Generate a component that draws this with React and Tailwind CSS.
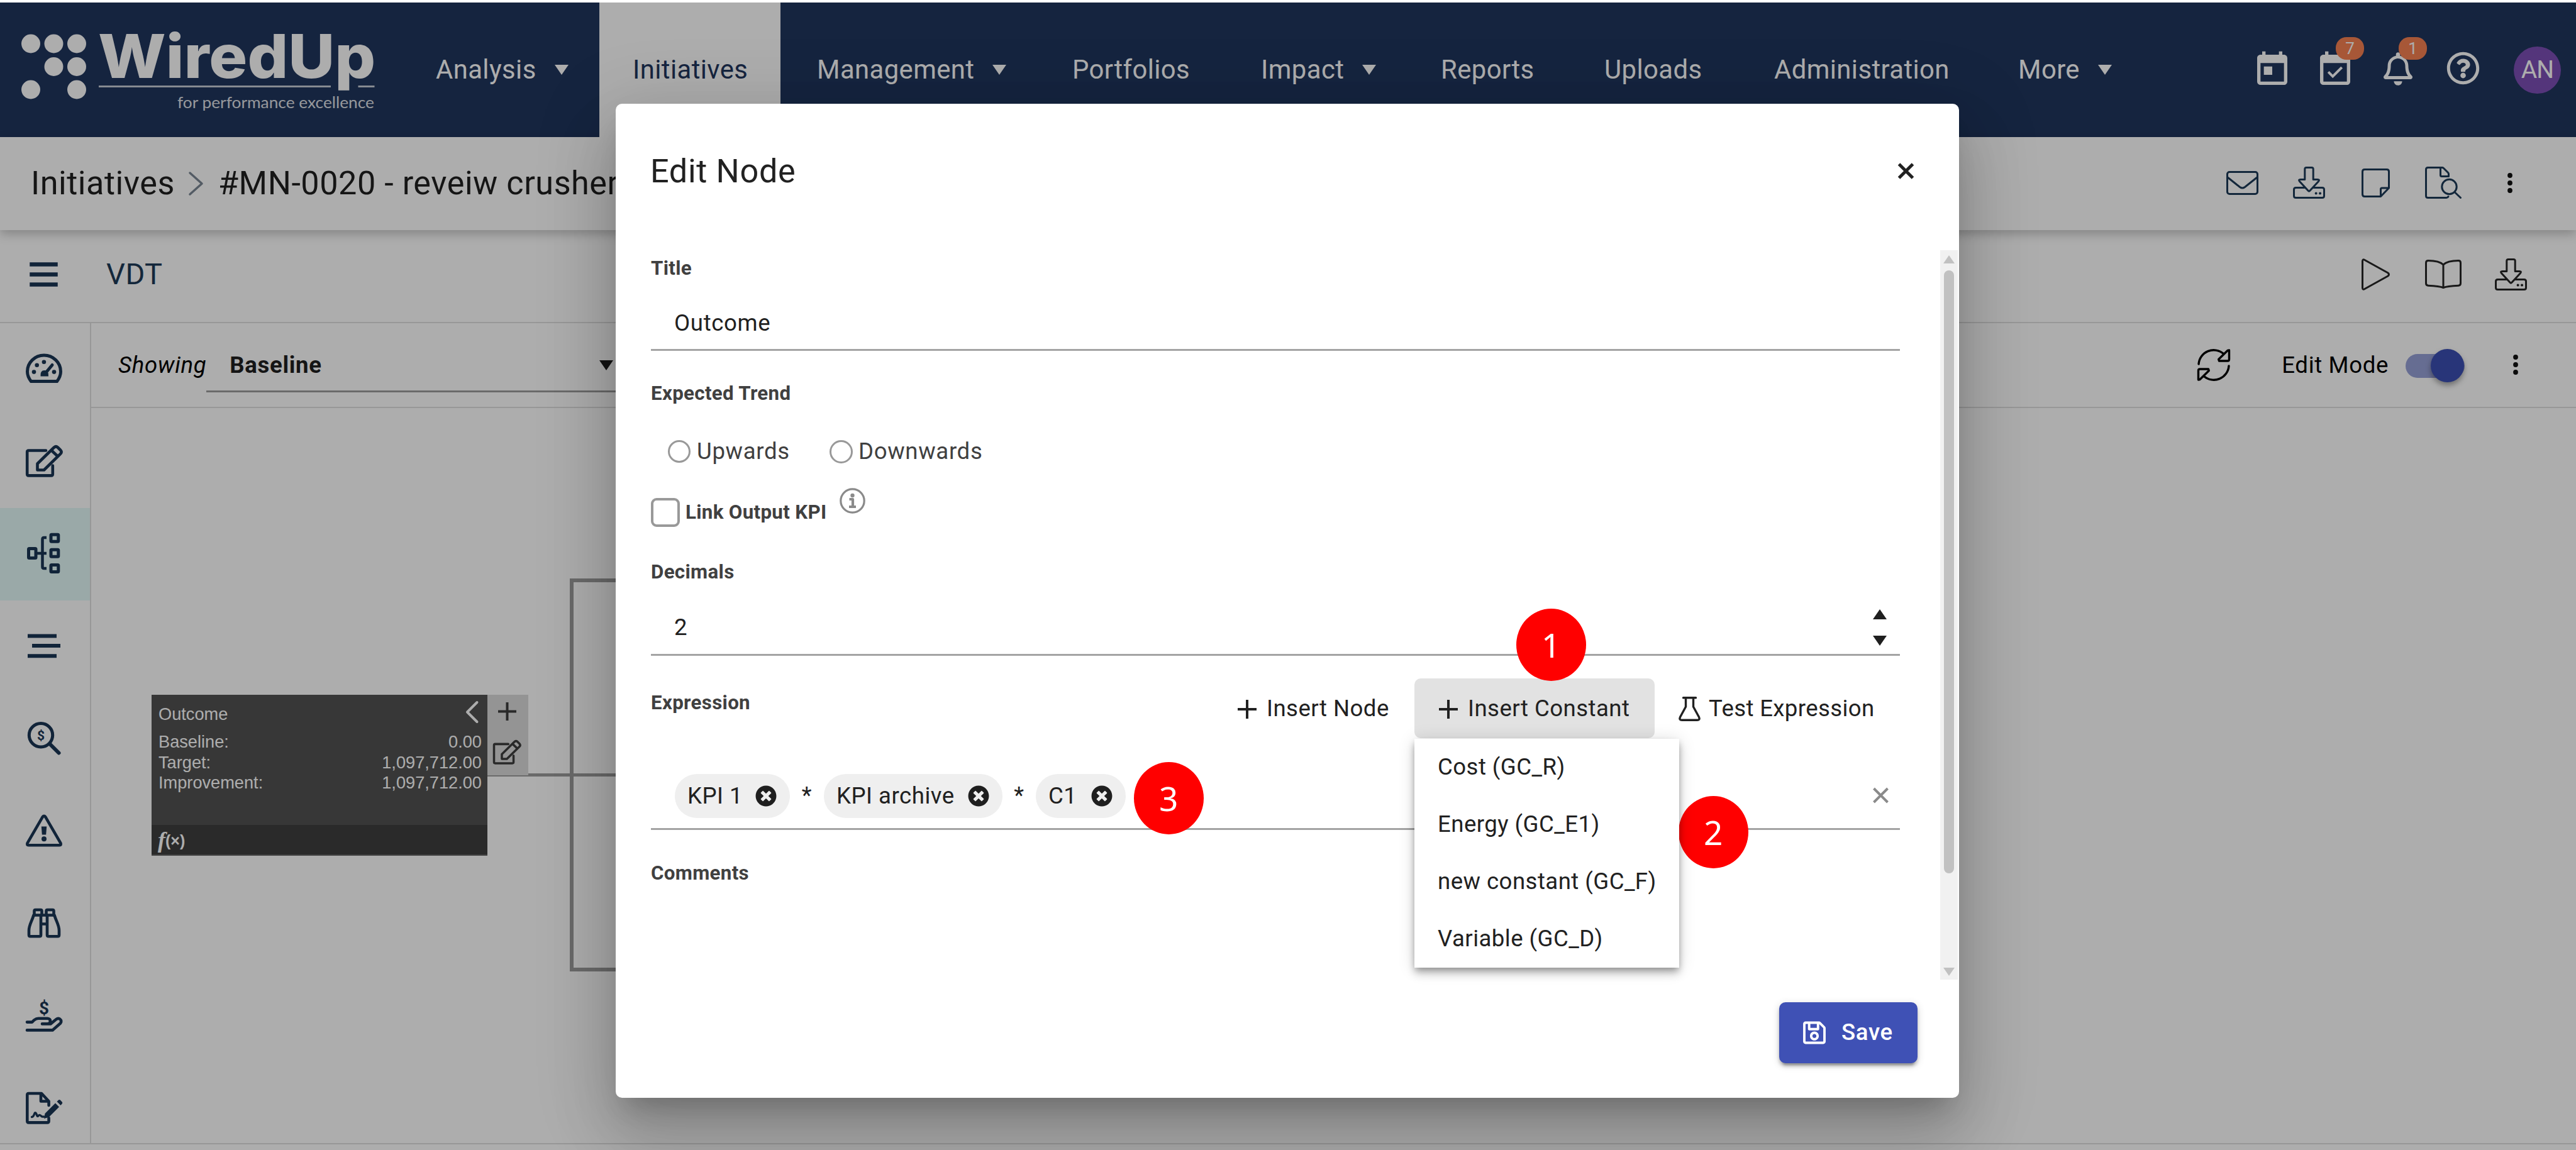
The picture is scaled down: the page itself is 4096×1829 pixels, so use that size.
import { FaRegBell, FaRegQuestionCircle, FaRegSave, FaTimesCircle } from 'react-icons/fa';
import { MdEventAvailable, MdToday } from 'react-icons/md';

const navItems = [
  { label: 'Analysis', caret: true, width: 'w-[314px]' },
  { label: 'Initiatives', active: true, width: 'w-[288px]' },
  { label: 'Management', caret: true, width: 'w-[401px]' },
  { label: 'Portfolios', width: 'w-[295px]' },
  { label: 'Impact', caret: true, width: 'w-[281px]' },
  { label: 'Reports', width: 'w-[255px]' },
  { label: 'Uploads', width: 'w-[265px]' },
  { label: 'Administration', width: 'w-[383px]' },
  { label: 'More', caret: true, width: 'w-[260px]' },
];

const constants = ['Cost (GC_R)', 'Energy (GC_E1)', 'new constant (GC_F)', 'Variable (GC_D)'];

const nodeRows = [
  ['Baseline:', '0.00'],
  ['Target:', '1,097,712.00'],
  ['Improvement:', '1,097,712.00'],
];

function Caret({ up, className = '' }) {
  return (
    <svg viewBox="0 0 22 16" className={`h-4 w-[22px] shrink-0 ${className}`} fill="currentColor">
      <path d={up ? 'M0 16 11 0l11 16z' : 'M0 0h22L11 16z'} />
    </svg>
  );
}

// Thin outline icon, drawn on a box with the icon's own size
function Line({ w, h, sw = 3, className = '', children }) {
  return (
    <svg
      width={w}
      height={h}
      viewBox={`0 0 ${w} ${h}`}
      fill="none"
      stroke="currentColor"
      strokeWidth={sw}
      strokeLinejoin="round"
      strokeLinecap="round"
      className={`shrink-0 overflow-visible ${className}`}
    >
      {children}
    </svg>
  );
}

function DownloadIcon({ className }) {
  return (
    <Line w={51} h={51} className={className}>
      <path d="M18.800 20.500V4q0-2.500 2.500-2.500h8.400q2.500 0 2.500 2.500v16.500H39q4 0 1.500 3L26.700 38.500q-1.200 1.200-2.400 0L10.500 23.500q-2.500-3 1.500-3z" />
      <path d="M18 33.500H4.500q-3 0-3 3V46.500q0 3 3 3h42q3 0 3-3V36.500q0-3-3-3H33" />
      <path d="M36.600 42.500h.1M43 42.500h.1" strokeWidth="4" />
    </Line>
  );
}

function EditIcon({ w = 60, h = 68, className }) {
  return (
    <svg
      width={w}
      height={h}
      viewBox="0 0 60 68"
      fill="none"
      stroke="currentColor"
      strokeWidth="4.6"
      strokeLinejoin="round"
      strokeLinecap="round"
      className={className}
    >
      <path d="M33 17.500H5.500q-2.300 0-2.300 2.300V55q0 2.400 2.300 2.400h36q2.300 0 2.300-2.400V41.500" />
      <path d="M19.500 48.500V38.500L46 12.500q3-2.500 5.800 0l4.500 4.500q2.500 2.900 0 5.700L30 48.500z" />
      <path d="m42 17.500 9 8.500" />
    </svg>
  );
}

function Dots({ className = '' }) {
  return (
    <svg width="8" height="32" viewBox="0 0 8 32" fill="#111" className={`shrink-0 ${className}`}>
      <circle cx="4" cy="4" r="3.9" />
      <circle cx="4" cy="16" r="3.9" />
      <circle cx="4" cy="28" r="3.9" />
    </svg>
  );
}

const sidebarIcons = [
  <Line key="gauge" w={60} h={68} sw={5}>
    <path d="M9.500 54.600C5.500 49.500 3.500 44 3.500 39a26.500 26 0 0 1 53 0c0 5-2 10.500-6 15.600z" />
    <path d="m31 43 12-14.500" />
    <g fill="currentColor" stroke="none">
      <circle cx="14" cy="39.6" r="3.3" />
      <circle cx="18.7" cy="28.7" r="3.3" />
      <circle cx="29.9" cy="23.7" r="3.3" />
      <circle cx="46" cy="39.6" r="3.3" />
      <path d="M24.500 46.600q-1-9.600 6.200-9.600t6.300 9.600z" />
    </g>
  </Line>,
  <EditIcon key="edit" />,
  <Line key="tree" w={60} h={68} sw={5}>
    <rect x="5.5" y="26.5" width="11.5" height="15" rx="1" />
    <rect x="41" y="4.3" width="11.8" height="11" rx="1" />
    <rect x="41" y="28.3" width="11.8" height="11" rx="1" />
    <rect x="41" y="52.5" width="11.8" height="11" rx="1" />
    <path d="M19 34h15M34 9h-4q-2.500 0-2.500 2.500v44q0 2.500 2.500 2.500h4" strokeWidth="4.5" strokeLinecap="butt" />
  </Line>,
  <Line key="lines" w={60} h={68} sw={6}>
    <path d="M7 18.400h40M14 34h39M7 50.300h40" strokeLinecap="square" />
  </Line>,
  <Line key="search" w={60} h={68} sw={5}>
    <circle cx="25" cy="29.2" r="18.7" />
    <path d="m39.500 43.500 14 14" strokeWidth="6" />
    <text x="25" y="37" textAnchor="middle" fontSize="21" fontWeight="700" fill="currentColor" stroke="none">$</text>
  </Line>,
  <Line key="warning" w={60} h={68} sw={4.6}>
    <path d="M27.800 12.200q2.200-3 4.400 0l24.200 41.600q1.400 3.400-1.800 3.400H5.400q-3.200 0-1.800-3.400z" />
    <path d="M25.800 27.500h8.400l-1 13h-6.400z" fill="currentColor" stroke="none" />
    <circle cx="30" cy="47.2" r="4" fill="currentColor" stroke="none" />
  </Line>,
  <Line key="binoculars" w={60} h={68} sw={4.6}>
    <path d="M14.500 21.500V15q0-2 2-2h8q2 0 2 2v6.500M33.500 21.500V15q0-2 2-2h8q2 0 2 2v6.500" />
    <path d="M13.500 21.500h33M13.500 21.500C10.500 32 6 37 6 46v7q0 2.200 2.200 2.200h14.600Q25 55.200 25 53V21.500M46.500 21.500C49.500 32 54 37 54 46v7q0 2.200-2.200 2.200H37.200Q35 55.200 35 53V21.500M25 35.500h10" />
  </Line>,
  <Line key="hand" w={60} h={68} sw={4.6}>
    <path d="M3 57.400h40.500L56 46.500q3-4-1-7-3-1.500-5.500.5l-9 7.400H27M3 44.600h8l3.500-3.400q3-2.400 6.500-2.400h14.500q4.500.4 4.500 4.200 0 4-4.500 4.400" />
    <text x="30" y="31.5" textAnchor="middle" fontSize="28" fontWeight="700" fill="currentColor" stroke="none">$</text>
  </Line>,
  <Line key="contract" w={60} h={68} sw={4.6}>
    <path d="M37.600 30v-6.500L26 11H5.600Q3.300 11 3.300 13.300V55q0 2.400 2.300 2.400h29.600q2.400 0 2.400-2.400v-5M25 11.500v12h12" />
    <path d="M10.500 48.500q2.500 0 4-4.500t3.500 0q1.300 5 3 2.500t4.500.5q1.500 1.500 4 1" strokeWidth="3.4" />
    <path d="m30 51 1.500-8L48 26.500l6 6L37.500 49zM50.500 24l2.500-2.500q1.500-1 2.800 0l3 3.200q1 1.300 0 2.600L56.500 30z" fill="currentColor" stroke="none" />
  </Line>,
];

function Logo() {
  return (
    <svg viewBox="0 0 639 214" className="h-[214px] w-[639px] shrink-0" fill="#fff">
      {[[49, 65.5], [85.5, 65.5], [122, 65.5], [85.5, 102], [122, 102], [49, 138.5], [122, 138.5]].map(([x, y]) => (
        <circle key={`${x}-${y}`} cx={x} cy={y} r="15" />
      ))}
      <text
        x="156"
        y="120"
        fontFamily="Inter, sans-serif"
        fontWeight="800"
        fontSize="96"
        textLength="441"
        lengthAdjust="spacingAndGlyphs"
      >
        WiredUp
      </text>
      <path d="M157 132h369v3H157zM569.500 132h26v3h-26z" opacity=".75" />
      <text
        x="282"
        y="168"
        fontFamily="Lato, sans-serif"
        fontSize="25"
        textLength="313"
        lengthAdjust="spacingAndGlyphs"
        opacity=".85"
      >
        for performance excellence
      </text>
    </svg>
  );
}

function TopBar() {
  return (
    <header className="flex h-[214px] bg-[#1f355d] text-white">
      <Logo />
      <nav className="flex gap-[5px] text-[41.8px] tracking-[0.01em]">
        {navItems.map((item) => (
          <div
            key={item.label}
            className={`flex items-center ${item.width} ${item.active ? '-ml-[5px] -mr-[1px] bg-white pl-[53px] text-[#1f355d]' : 'pl-[54px]'}`}
          >
            <span>{item.label}</span>
            {item.caret && <Caret className="ml-[29px]" />}
          </div>
        ))}
      </nav>
      <div className="ml-auto flex items-center pr-[24px]">
        <MdToday className="size-16" />
        <div className="relative ml-[36px]">
          <MdEventAvailable className="size-16" />
          <Badge>7</Badge>
        </div>
        <div className="relative ml-[45px] -mt-1">
          <FaRegBell className="h-[53px] w-[46px]" />
          <Badge className="-right-[23px] -top-[24px]">1</Badge>
        </div>
        <FaRegQuestionCircle className="ml-[54px] -mt-1.5 size-[53px]" />
        <div className="ml-[54px] flex size-[75px] items-center justify-center rounded-full bg-[#7d4fb5] text-[39px] tracking-tight">
          AN
        </div>
      </div>
    </header>
  );
}

function Badge({ children, className = '-right-[14px] -top-[20px]' }) {
  return (
    <span
      className={`absolute flex h-[36px] w-[45px] items-center justify-center rounded-[17px] bg-[#f78152] text-[26px] leading-none ${className}`}
    >
      {children}
    </span>
  );
}

function Breadcrumb() {
  return (
    <div className="flex h-[148px] items-center pl-[49px] pr-[101px] shadow-[0_6px_16px_rgba(0,0,0,0.24)]">
      <div className="flex items-center text-[52.2px] tracking-[0.01em] text-[#1f1f1f]">
        <span>Initiatives</span>
        <Line w={23} h={36} sw={3.5} className="ml-[22px] text-[#7b8794]">
          <path d="m2 1 19 17L2 35" />
        </Line>
        <span className="ml-[24px] whitespace-nowrap">#MN-0020 - reveiw crusher</span>
      </div>
      <div className="ml-auto flex items-center pb-[3px] text-[#1c3a57]">
        <Line w={51} h={38}>
          <rect x="1.5" y="1.5" width="48" height="35" rx="3.5" />
          <path d="m2 10 19.500 15.500q4 3 8 0L49 10" />
        </Line>
        <DownloadIcon className="ml-[55px]" />
        <Line w={45} h={46} className="ml-[58px]">
          <path d="M43.500 31V5q0-3.500-3.500-3.500H5Q1.500 1.500 1.500 5v36q0 3.500 3.500 3.500h25.500zM30.500 44V33q0-2 2-2h11" />
        </Line>
        <Line w={58} h={51} className="ml-[56px]">
          <path d="M37.500 15.500V12q0-1.500-1-2.500l-7-7q-1-1-2.500-1H4.500q-3 0-3 3v42q0 3 3 3H34q2 0 3-2M24.500 2v11.500q0 2 2 2h11" />
          <circle cx="38.5" cy="32" r="11.7" />
          <path d="m47 40.500 9.500 9" />
        </Line>
        <Dots className="ml-[73px]" />
      </div>
    </div>
  );
}

function PageTitle() {
  return (
    <div className="flex h-[148px] items-center border-b-2 border-[#dfdfdf] pb-[6px] pl-[47px] pr-[78px]">
      <Line w={45} h={39} sw={6.5} className="text-[#1a3555]">
        <path d="M3.500 3.500h38M3.500 19.500h38M3.500 35.500h38" strokeLinecap="square" />
      </Line>
      <span className="ml-[77px] text-[47px] tracking-[0.01em] text-[#1c3a57]">VDT</span>
      <div className="ml-auto flex items-center text-[#262626]">
        <Line w={45} h={51}>
          <path d="M1.500 4.500v42q0 4 3.500 2l37-20.500q3-2.500 0-5L5 2.500q-3.500-2-3.500 2z" />
        </Line>
        <Line w={58} h={46} className="ml-[56px]">
          <path d="M29 8C24 3 14 1.500 5 1.500q-3.500 0-3.500 3.500v32.500q0 3.500 3.500 3.700c9 .4 18 .8 24 3.300 6-2.500 15-2.900 24-3.300q3.500-.2 3.500-3.700V5q0-3.500-3.500-3.500C44 1.500 34 3 29 8zv36" />
        </Line>
        <DownloadIcon className="ml-[53px]" />
      </div>
    </div>
  );
}

function Sidebar() {
  return (
    <aside className="w-[145px] shrink-0 overflow-hidden border-r-2 border-[#dfdfdf] text-[#1a3555]">
      {sidebarIcons.map((icon, i) => (
        <div
          key={i}
          className={`flex h-[147px] items-center justify-center pb-[4px] pr-[3px] ${i === 2 ? 'bg-[#e4faf8]' : ''}`}
        >
          {icon}
        </div>
      ))}
    </aside>
  );
}

function Toolbar() {
  return (
    <div className="flex h-[135px] items-center border-b-2 border-[#dfdfdf] pl-[43px] pr-[92px] text-[36.6px] tracking-[0.018em] text-black">
      <span className="pt-[2px] italic">Showing</span>
      <div className="flex h-[86px] w-[800px] items-center border-b-[3px] border-[#9d9d9d] pl-[37px] pt-[4px] font-bold text-[#1f1f1f]">
        <span>Baseline</span>
        <Caret className="ml-[441px]" />
      </div>
      <div className="ml-auto flex items-center">
        <Line w={52} h={51} sw={3.4}>
          <path d="M2 24A24 24 0 0 1 41.500 7.500M50.500 2v14.500q0 2.500-2.500 2.500H34.500l-.8-2.500L48 2.500z" />
          <path d="M50 27A24 24 0 0 1 10.500 43.500M1.500 49V34.500Q1.500 32 4 32h13.500l.8 2.500L4 48.500z" />
        </Line>
        <span className="ml-[82px] pt-[2px]">Edit Mode</span>
        <div className="relative ml-[27px] mt-[4px] h-[38px] w-[94px] rounded-full bg-[#3f51b5]/54">
          <span className="absolute -top-[8px] left-[40px] size-[53px] rounded-full bg-[#3c4fb3] shadow-[0_5px_8px_rgba(0,0,0,0.35)]" />
        </div>
        <Dots className="ml-[77px]" />
      </div>
    </div>
  );
}

function Canvas() {
  return (
    <div className="relative flex-1">
      <div className="absolute left-[630px] top-[581px] h-[5px] w-[400px] bg-[#9c9c9c]" />
      <div className="absolute left-[761px] top-[271px] h-[625px] w-[400px] border-[6px] border-[#9c9c9c]" />
      <div className="absolute left-[96px] top-[456px] flex h-[256px] w-[534px] flex-col border-b-2 border-[#666] bg-[#525252] font-['Liberation_Sans',sans-serif] text-[27.2px] leading-[32.4px] text-white">
        <div className="flex items-center justify-between pl-[11px] pr-[14px] pt-[7px]">
          <span className="pt-[8px]">Outcome</span>
          <Line w={21} h={35} sw={4}>
            <path d="M18.500 2 3 17.500l15.500 15.500" />
          </Line>
        </div>
        <div className="pl-[11px] pr-[9px] pt-[12px]">
          {nodeRows.map(([name, value]) => (
            <div key={name} className="flex justify-between">
              <span>{name}</span>
              <span>{value}</span>
            </div>
          ))}
        </div>
        <div className="mt-auto flex h-[47px] items-center bg-[#3f3f3f] pl-[10px] font-bold leading-none">
          <span className="font-['Liberation_Serif',serif] text-[36px] italic">f</span>
          <span className="pt-[3px] text-[25px]">(×)</span>
        </div>
      </div>
      <div className="absolute left-[630px] top-[456px] flex h-[128px] w-[65px] flex-col items-center bg-[#dadada] pt-[12px] text-[#3d3d3d]">
        <Line w={29} h={29} sw={4} className="mr-[2px]">
          <path d="M14.500 0v29M0 14.500h29" strokeLinecap="butt" />
        </Line>
        <EditIcon w={46} h={52} className="mr-[4px] mt-[24px]" />
      </div>
    </div>
  );
}

function Label({ children, className = '' }) {
  return (
    <div className={`flex h-10 items-center text-[31.3px] font-bold tracking-[0.01em] text-[#404040] ${className}`}>
      {children}
    </div>
  );
}

function Plus() {
  return (
    <Line w={30} h={30} sw={4} className="mr-[16px]">
      <path d="M15 0v30M0 15h30" strokeLinecap="butt" />
    </Line>
  );
}

function Chip({ children, className = '' }) {
  return (
    <span className={`flex h-[70px] items-center rounded-[35px] bg-[#efefef] pl-[20px] tracking-[0.014em] ${className}`}>
      <span className="flex-1">{children}</span>
      <FaTimesCircle className="mr-[21px] size-[34px] text-[#1f1f1f]" />
    </span>
  );
}

function Callout({ children, className }) {
  return (
    <div
      className={`absolute flex h-[115px] w-[111px] items-center justify-center rounded-[50%] bg-[#ff0000] font-['Noto_Sans',sans-serif] text-[53px] leading-none text-white ${className}`}
    >
      {children}
    </div>
  );
}

function Scrollbar() {
  return (
    <div className="mr-[2px] flex w-[28px] shrink-0 flex-col items-center bg-[#f1f1f1] text-[#c1c1c1]">
      <Caret up className="mt-[8px] h-[13px]" />
      <div className="mt-[11px] h-[959px] w-4 rounded-full bg-[#c1c1c1]" />
      <Caret className="mb-[6px] mt-auto h-[13px]" />
    </div>
  );
}

function EditNodeDialog() {
  return (
    <div className="absolute left-[979px] top-[165px] flex h-[1581px] w-[2136px] flex-col rounded-[10px] bg-white text-[36.6px] tracking-[0.018em] text-[#212121] shadow-[0_29px_39px_-18px_rgba(0,0,0,0.2),0_63px_99px_8px_rgba(0,0,0,0.14),0_24px_120px_21px_rgba(0,0,0,0.12)]">
      <div className="flex h-[233px] items-start justify-between pl-[55px] pr-[71px] pt-[74px]">
        <h2 className="text-[52.2px] leading-[67px] tracking-[0.0125em]">Edit Node</h2>
        <Line w={27} h={26} sw={5} className="mt-[20px]">
          <path d="m2.500 2 22 22M24.500 2l-22 22" strokeLinecap="butt" />
        </Line>
      </div>

      <div className="flex h-[1160px]">
        <div className="mr-auto w-[2042px] pl-[56px] pt-[9px]">
          <Label>Title</Label>
          <div className="mt-[27px] flex h-[84px] items-center border-b-[3px] border-[#a3a3a3] pl-[37px]">Outcome</div>

          <Label className="mt-[48px]">Expected Trend</Label>
          <div className="mt-[52px] flex h-10 items-center pl-[27px] text-[#404040]">
            <span className="size-[36px] rounded-full border-[3px] border-[#999]" />
            <span className="ml-[10px] w-[211px]">Upwards</span>
            <span className="size-[37px] rounded-full border-[3px] border-[#999]" />
            <span className="ml-[9px]">Downwards</span>
          </div>
          <div className="mt-[54px] flex h-[46px] items-center">
            <span className="size-[46px] rounded-[9px] border-[4px] border-[#999]" />
            <Label className="ml-[9px]">Link Output KPI</Label>
            <Line w={41} h={41} sw={3.2} className="-mt-[38px] ml-[21px] text-[#8a8a8a]">
              <circle cx="20.5" cy="20.5" r="18.7" />
              <circle cx="20.5" cy="12" r="3.2" fill="currentColor" stroke="none" />
              <path d="M15.500 18h5.500v12M15 30h11" strokeLinecap="butt" strokeWidth="4.2" />
            </Line>
          </div>

          <Label className="mt-[52px]">Decimals</Label>
          <div className="mt-[28px] flex h-[85px] items-center justify-between border-b-[3px] border-[#a3a3a3] pb-[2px] pl-[37px] pr-[21px]">
            <span>2</span>
            <span className="flex flex-col gap-[26px] text-[#1f1f1f]">
              <Caret up />
              <Caret />
            </span>
          </div>

          <div className="mt-[36px] flex h-[95px] justify-between">
            <Label className="mt-[19px]">Expression</Label>
            <div className="flex tracking-[0.0125em]">
              <div className="flex w-[320px] items-center pl-[39px] pt-[2px]">
                <Plus />
                Insert Node
              </div>
              <div className="relative flex w-[382px] items-center rounded-[10px] bg-[#e2e2e2] pl-[39px] pt-[2px]">
                <Plus />
                Insert Constant
                <ul className="absolute left-0 top-[96px] z-10 w-[421px] bg-white shadow-[0_5px_10px_-2px_rgba(0,0,0,0.3),0_10px_13px_rgba(0,0,0,0.16),0_2px_26px_rgba(0,0,0,0.14)]">
                  {constants.map((name) => (
                    <li key={name} className="flex h-[91px] items-center whitespace-nowrap pl-[37px]">
                      {name}
                    </li>
                  ))}
                </ul>
              </div>
              <div className="flex w-[390px] items-center pl-[38px] pt-[2px] tracking-[0.01em]">
                <Line w={35} h={39} sw={3.4} className="mr-[13px]">
                  <path d="M7.500 1.700h20M11.500 2v14L2.500 32.500q-2 4.700 3 4.800h24q5-.1 3-4.800L23.500 16V2" />
                </Line>
                Test Expression
              </div>
            </div>
          </div>
          <div className="flex h-[146px] items-end border-b-[3px] border-[#a3a3a3] pb-4 pl-[38px] pr-[18px]">
            <Chip className="w-[183px]">KPI 1</Chip>
            <span className="w-[54px] self-center pt-[56px] text-center">*</span>
            <Chip className="w-[284px]">KPI archive</Chip>
            <span className="w-[53px] self-center pt-[56px] text-center">*</span>
            <Chip className="w-[143px]">C1</Chip>
            <Line w={25} h={24} sw={4} className="mb-[24px] ml-auto text-[#8a8a8a]">
              <path d="m1.500 1 22 22M23.500 1l-22 22" strokeLinecap="butt" />
            </Line>
          </div>

          <Label className="mt-[49px]">Comments</Label>
        </div>
        <Scrollbar />
      </div>

      <div className="flex justify-end pr-[66px] pt-[36px]">
        <button className="flex h-[97px] w-[220px] items-center rounded-[10px] bg-[#3f51b5] pl-[38px] font-medium text-white shadow-[0_8px_3px_-5px_rgba(0,0,0,0.2),0_5px_5px_rgba(0,0,0,0.2),0_3px_13px_rgba(0,0,0,0.16)]">
          <FaRegSave className="mr-[25px] h-[41px] w-[36px]" />
          Save
        </button>
      </div>

      <Callout className="left-[1432px] top-[803px]">1</Callout>
      <Callout className="left-[1690px] top-[1101px]">2</Callout>
      <Callout className="left-[824px] top-[1047px]">3</Callout>
    </div>
  );
}

export default function App() {
  return (
    <div className="relative h-[1829px] w-[4096px] overflow-hidden bg-white pt-1 font-[Roboto,sans-serif] leading-normal">
      <TopBar />
      <Breadcrumb />
      <PageTitle />
      <div className="flex h-[1306px] border-b-2 border-[#dfdfdf]">
        <Sidebar />
        <div className="flex flex-1 flex-col">
          <Toolbar />
          <Canvas />
        </div>
      </div>
      {/* Backdrop behind the dialog */}
      <div className="absolute inset-x-0 bottom-0 top-1 bg-black/32" />
      <EditNodeDialog />
    </div>
  );
}
